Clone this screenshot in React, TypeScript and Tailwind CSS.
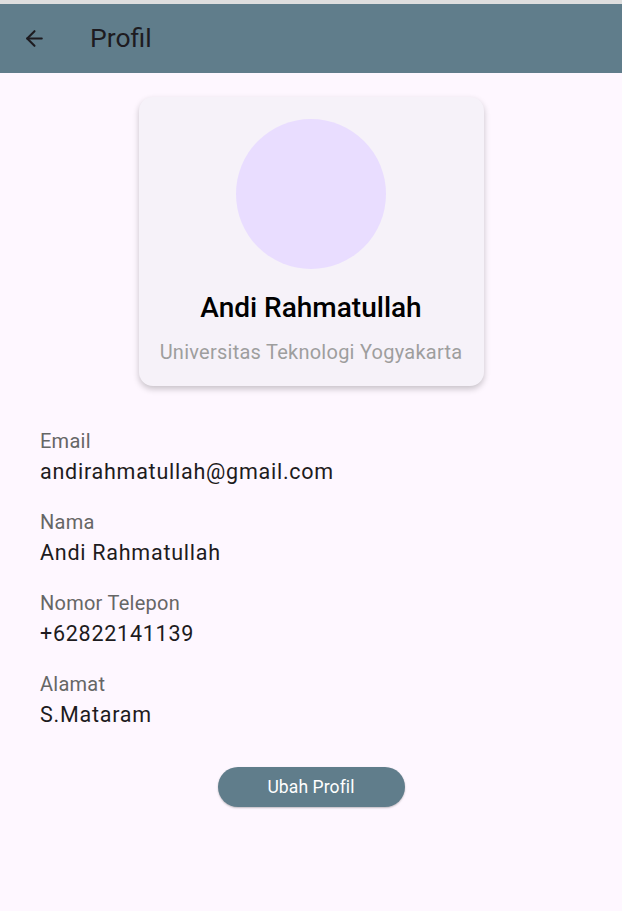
import { ArrowLeft } from "lucide-react";

const fields = [
  { label: "Email", value: "andirahmatullah@gmail.com" },
  { label: "Nama", value: "Andi Rahmatullah" },
  { label: "Nomor Telepon", value: "+62822141139" },
  { label: "Alamat", value: "S.Mataram" },
];

export default function App() {
  return (
    <div className="min-h-[911px] bg-[#fef7ff] font-['Roboto',sans-serif]">
      <div className="h-[4px] bg-[#dedede]" />
      <header className="flex h-[69px] items-center bg-[#607d8b] text-[#1d1b20]">
        <div className="flex w-[90px] items-center pl-[22px]">
          <ArrowLeft size={25} strokeWidth={2} />
        </div>
        <h1 className="text-[26.5px] leading-none">Profil</h1>
      </header>

      <div className="flex justify-center pt-[24px]">
        <div className="flex w-[345px] flex-col items-center rounded-[14px] bg-[#f6f2f9] pt-[22px] pb-[20px] shadow-[0_3px_6px_rgba(0,0,0,0.22)]">
          <div className="h-[150px] w-[150px] rounded-full bg-[#e9ddff]" />
          <div className="mt-[22px] h-[34px] text-[28px] font-medium leading-[34px] text-black">Andi Rahmatullah</div>
          <div className="mt-[13px] h-[28px] text-[20px] leading-[28px] tracking-[0.25px] text-[#9e9e9e]">
            Universitas Teknologi Yogyakarta
          </div>
        </div>
      </div>

      <div className="flex flex-col px-[40px] pt-[42px]">
        {fields.map((f) => (
          <div key={f.label} className="mb-[22px] last:mb-0">
            <div className="h-[26px] text-[20px] leading-[26px] tracking-[0.25px] text-[#666666]">{f.label}</div>
            <div className="mt-[3px] h-[30px] text-[21.5px] leading-[30px] tracking-[0.75px] text-[#1d1b20]">{f.value}</div>
          </div>
        ))}
      </div>

      <div className="flex justify-center pt-[37px]">
        <button className="h-[40px] w-[187px] rounded-full bg-[#607d8b] text-[17.5px] font-normal tracking-[0.1px] text-white shadow-[0_1px_2px_rgba(0,0,0,0.25)]">
          Ubah Profil
        </button>
      </div>
    </div>
  );
}
